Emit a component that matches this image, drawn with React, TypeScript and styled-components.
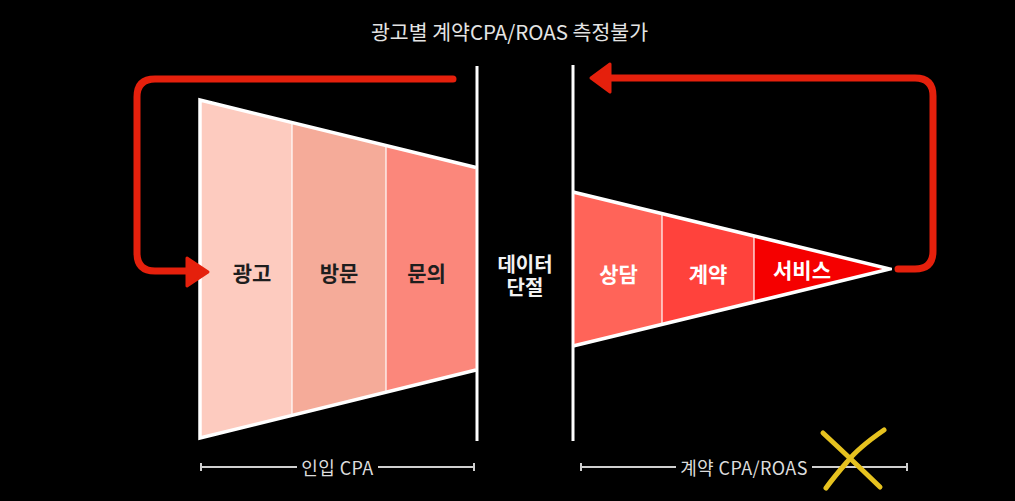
import styled, { createGlobalStyle } from 'styled-components';

// Funnel geometry in page coordinates (the svg viewBox is offset to match).
const RED = '#e5200c';
const KR = `"Noto Sans CJK KR", "Noto Sans", sans-serif`;

const leftSegments = [
  { label: '광고', width: 92, fill: '#fdcbbf', nudge: 6 },
  { label: '방문', width: 94, fill: '#f5ab99', nudge: 0 },
  { label: '문의', width: 89, fill: '#fb877b', nudge: -4 },
];

const rightSegments = [
  { label: '상담', width: 87, fill: '#ff6459', shift: 0, align: 'center' },
  { label: '계약', width: 92, fill: '#ff423c', shift: 0, align: 'center' },
  { label: '서비스', width: 134, fill: '#f50000', shift: -4, align: 'flex-start' },
];

function App() {
  return (
    <Page>
      <GlobalStyle />
      <Title>광고별 계약CPA/ROAS 측정불가</Title>

      <Diagram>
        <LeftFunnel>
          <svg width="284" height="382" viewBox="196 62 284 382">
            <polygon points="200,100 292,122.4 292,415.2 200,438" fill={leftSegments[0].fill} />
            <polygon points="292,122.4 386,145.3 386,392 292,415.2" fill={leftSegments[1].fill} />
            <polygon points="386,145.3 476,167.2 476,370 386,392" fill={leftSegments[2].fill} />
            <line x1="292" y1="122" x2="292" y2="415" stroke="#fff" strokeWidth="1.2" />
            <line x1="386" y1="145" x2="386" y2="392" stroke="#fff" strokeWidth="1.2" />
            <polyline
              points="476,167.5 200,100 200,438 476,370"
              fill="none"
              stroke="#fff"
              strokeWidth="3.5"
              strokeLinejoin="miter"
            />
            <line x1="477" y1="66" x2="477" y2="441" stroke="#fff" strokeWidth="3" />
          </svg>
          <LeftLabels>
            {leftSegments.map((s) => (
              <Segment key={s.label} $width={s.width} $align="center">
                <DarkLabel $nudge={s.nudge}>{s.label}</DarkLabel>
              </Segment>
            ))}
          </LeftLabels>
        </LeftFunnel>

        <Break>
          <BreakLine>데이터</BreakLine>
          <BreakLine>단절</BreakLine>
        </Break>

        <RightFunnel>
          <svg width="322" height="382" viewBox="570 62 322 382">
            <polygon points="574,192 662,213.7 662,323.5 574,345" fill={rightSegments[0].fill} />
            <polygon points="662,213.7 754,236.4 754,300.8 662,323.5" fill={rightSegments[1].fill} />
            <polygon points="754,236.4 889,269 754,300.8" fill={rightSegments[2].fill} />
            <line x1="662" y1="214" x2="662" y2="323" stroke="#fff" strokeWidth="1.2" />
            <line x1="754" y1="236" x2="754" y2="301" stroke="#fff" strokeWidth="1.2" />
            <polyline
              points="573,192 890,269 573,346"
              fill="none"
              stroke="#fff"
              strokeWidth="3.5"
              strokeLinejoin="miter"
              strokeMiterlimit="10"
            />
            <line x1="573" y1="65" x2="573" y2="441" stroke="#fff" strokeWidth="3" />
          </svg>
          <RightLabels>
            {rightSegments.map((s) => (
              <Segment key={s.label} $width={s.width} $align={s.align}>
                <LightLabel $shift={s.shift}>{s.label}</LightLabel>
              </Segment>
            ))}
          </RightLabels>
        </RightFunnel>
      </Diagram>

      <Scales>
        <Scale $width={275}>
          <Tick />
          <Rule />
          <ScaleText>인입 CPA</ScaleText>
          <Rule />
          <Tick />
        </Scale>
        <Scale $width={328}>
          <Tick />
          <Rule />
          <ScaleText>계약 CPA/ROAS</ScaleText>
          <Rule />
          <Tick />
        </Scale>
      </Scales>

      {/* red feedback arrows and the yellow cross sit over the diagram */}
      <Overlay width="1015" height="501" viewBox="0 0 1015 501">
        <path
          d="M453 79 H155 Q137 79 137 97 V253 Q137 271 155 271 H190"
          fill="none"
          stroke={RED}
          strokeWidth="7"
          strokeLinecap="round"
        />
        <polygon points="187,258 208,272 187,286" fill={RED} stroke={RED} strokeWidth="3" strokeLinejoin="round" />
        <path
          d="M898 269 H915 Q933 269 933 251 V96 Q933 78 915 78 H606"
          fill="none"
          stroke={RED}
          strokeWidth="7"
          strokeLinecap="round"
        />
        <polygon points="610,64 591,78 610,92" fill={RED} stroke={RED} strokeWidth="3" strokeLinejoin="round" />

        <path d="M823 433 Q850 458 880 487" fill="none" stroke="#e6c21f" strokeWidth="5" strokeLinecap="round" />
        <path d="M884 430 Q858 448 847 462 Q834 477 826 488" fill="none" stroke="#e6c21f" strokeWidth="5" strokeLinecap="round" />
      </Overlay>
    </Page>
  );
}

const GlobalStyle = createGlobalStyle`
  body {
    margin: 0;
    background: #000;
    font-family: ${KR};
  }
`;

const Page = styled.div`
  position: relative;
  width: 1015px;
  height: 501px;
  background: #000;
  overflow: hidden;
  display: flex;
  flex-direction: column;
`;

const Title = styled.h1`
  margin: 0;
  padding: 19px 0 0 4px;
  height: 24px;
  line-height: 24px;
  text-align: center;
  font-size: 20.5px;
  font-weight: 400;
  color: #e4e4e4;
`;

const Diagram = styled.div`
  display: flex;
  margin: 19px 0 0 196px;
  height: 382px;
`;

const LeftFunnel = styled.div`
  position: relative;
  width: 284px;
  height: 382px;

  svg {
    display: block;
  }
`;

const RightFunnel = styled(LeftFunnel)`
  width: 322px;
`;

const LeftLabels = styled.div`
  position: absolute;
  top: 198px;
  left: 4px;
  display: flex;
`;

const RightLabels = styled(LeftLabels)`
  left: 5px;
  top: 199px;
`;

const Segment = styled.div<{ $width: number; $align: string }>`
  width: ${(p) => p.$width}px;
  display: flex;
  justify-content: ${(p) => p.$align};
  padding-left: ${(p) => (p.$align === 'flex-start' ? '19px' : '0')};
  box-sizing: border-box;
`;

const DarkLabel = styled.span<{ $nudge: number }>`
  font-size: 21px;
  line-height: 24px;
  font-weight: 700;
  color: #1e1e1e;
  transform: translateX(${(p) => p.$nudge}px);
`;

const LightLabel = styled.span<{ $shift: number }>`
  font-size: 21px;
  line-height: 24px;
  font-weight: 700;
  color: #fff;
  transform: translateY(${(p) => p.$shift}px);
`;

const Break = styled.div`
  width: 90px;
  padding-top: 190px;
  box-sizing: border-box;
  display: flex;
  flex-direction: column;
  align-items: center;
`;

const BreakLine = styled.span`
  height: 23px;
  font-size: 20px;
  line-height: 23px;
  font-weight: 700;
  color: #f2f2f2;
`;

const Scales = styled.div`
  display: flex;
  gap: 105px;
  margin: 13px 0 0 200px;
  height: 20px;
`;

const Scale = styled.div<{ $width: number }>`
  width: ${(p) => p.$width}px;
  display: flex;
  align-items: center;
`;

const Tick = styled.span`
  width: 2px;
  height: 8px;
  background: #cfcfcf;
`;

const Rule = styled.span`
  flex: 1;
  height: 2px;
  background: #cfcfcf;
`;

const ScaleText = styled.span`
  padding: 0 4px;
  font-size: 18px;
  line-height: 20px;
  color: #dcdcdc;
  letter-spacing: 0.4px;
`;

const Overlay = styled.svg`
  position: absolute;
  left: 0;
  top: 0;
  pointer-events: none;
`;

export default App;
